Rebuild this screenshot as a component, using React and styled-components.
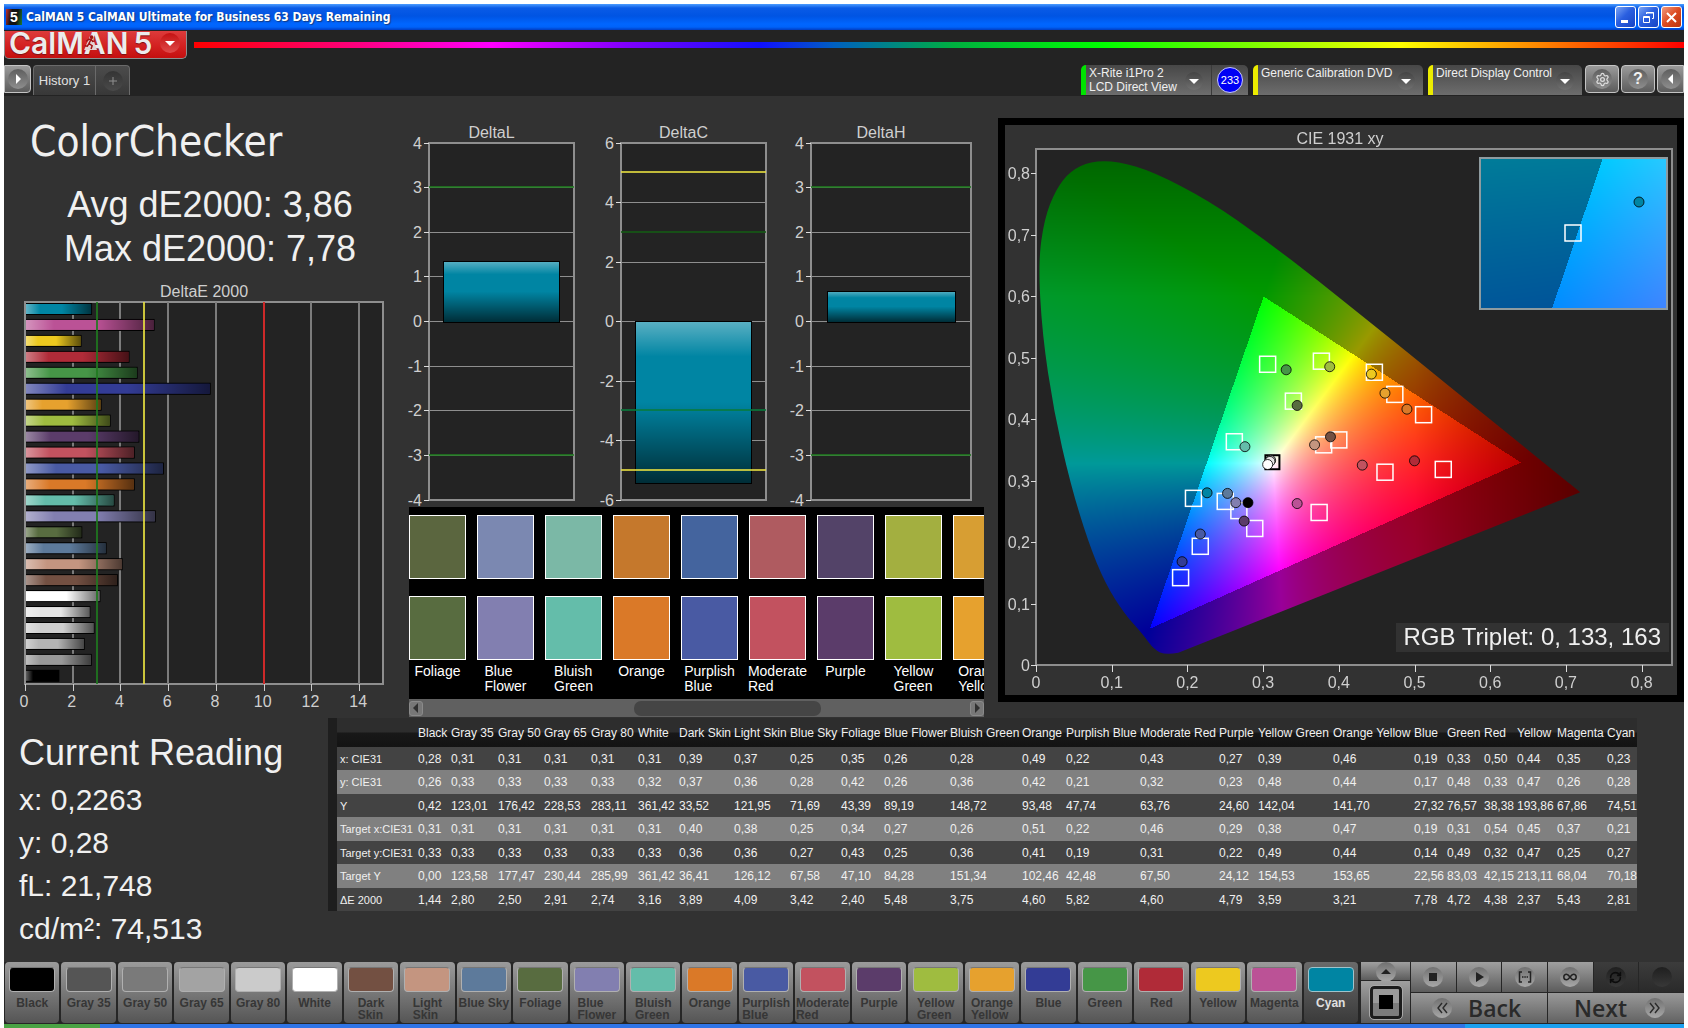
import React, { useEffect, useRef } from "react"
import styled, { createGlobalStyle } from "styled-components"
import { RefreshCw, Settings } from "lucide-react"

const sans = `"Liberation Sans", Arial, sans-serif`
const humanist = `"Open Sans", "Noto Sans", sans-serif`
const condensed = `"DejaVu Sans Condensed", "DejaVu Sans", sans-serif`

const theme = {
    shell: "#232323",
    panel: "#323232",
    frame: "#8e8e8e",
    text: "#f0f0f0",
    label: "#cfcfcf",
    good: "#1f7a1f",
    warn: "#e8e040",
    bad: "#d62020"
}

const GlobalStyle = createGlobalStyle`
    *, *::before, *::after {
        box-sizing: border-box;
    }
    body {
        margin: 0;
        background: #fff;
        font-family: ${sans};
        color: ${theme.text};
    }
    button {
        font-family: inherit;
        padding: 0;
        margin: 0;
        cursor: pointer;
    }
    h1, h2, p {
        margin: 0;
        font-weight: normal;
    }
`

/* ---------- data ---------- */

const patches = [
    { name: "Black", color: "#000000", x: "0,28", y: "0,26", Y: "0,42", tx: "0,31", ty: "0,33", tY: "0,00", dE: "1,44", col: 33 },
    { name: "Gray 35", color: "#555555", bar: "#999999", x: "0,31", y: "0,33", Y: "123,01", tx: "0,31", ty: "0,33", tY: "123,58", dE: "2,80", col: 47 },
    { name: "Gray 50", color: "#7a7a7a", bar: "#b4b4b4", x: "0,31", y: "0,33", Y: "176,42", tx: "0,31", ty: "0,33", tY: "177,47", dE: "2,50", col: 46 },
    { name: "Gray 65", color: "#a3a3a3", bar: "#cfcfcf", x: "0,31", y: "0,33", Y: "228,53", tx: "0,31", ty: "0,33", tY: "230,44", dE: "2,91", col: 47 },
    { name: "Gray 80", color: "#cbcbcb", bar: "#e6e6e6", x: "0,31", y: "0,33", Y: "283,11", tx: "0,31", ty: "0,33", tY: "285,99", dE: "2,74", col: 47 },
    { name: "White", color: "#ffffff", x: "0,31", y: "0,32", Y: "361,42", tx: "0,31", ty: "0,33", tY: "361,42", dE: "3,16", col: 41 },
    { name: "Dark Skin", color: "#735042", x: "0,39", y: "0,37", Y: "33,52", tx: "0,40", ty: "0,36", tY: "36,41", dE: "3,89", col: 55 },
    { name: "Light Skin", color: "#c49580", x: "0,37", y: "0,36", Y: "121,95", tx: "0,38", ty: "0,36", tY: "126,12", dE: "4,09", col: 56 },
    { name: "Blue Sky", color: "#5d7a9b", x: "0,25", y: "0,28", Y: "71,69", tx: "0,25", ty: "0,27", tY: "67,58", dE: "3,42", col: 51 },
    { name: "Foliage", color: "#586c40", x: "0,35", y: "0,42", Y: "43,39", tx: "0,34", ty: "0,43", tY: "47,10", dE: "2,40", col: 43 },
    { name: "Blue Flower", color: "#827fb0", x: "0,26", y: "0,26", Y: "89,19", tx: "0,27", ty: "0,25", tY: "84,28", dE: "5,48", col: 66 },
    { name: "Bluish Green", color: "#64bdaa", x: "0,28", y: "0,36", Y: "148,72", tx: "0,26", ty: "0,36", tY: "151,34", dE: "3,75", col: 72 },
    { name: "Orange", color: "#da7928", x: "0,49", y: "0,42", Y: "93,48", tx: "0,51", ty: "0,41", tY: "102,46", dE: "4,60", col: 44 },
    { name: "Purplish Blue", color: "#495aa3", x: "0,22", y: "0,21", Y: "47,74", tx: "0,22", ty: "0,19", tY: "42,48", dE: "5,82", col: 74 },
    { name: "Moderate Red", color: "#c2525f", x: "0,43", y: "0,32", Y: "63,76", tx: "0,46", ty: "0,31", tY: "67,50", dE: "4,60", col: 79 },
    { name: "Purple", color: "#5b3c6a", x: "0,27", y: "0,23", Y: "24,60", tx: "0,29", ty: "0,22", tY: "24,12", dE: "4,79", col: 39 },
    { name: "Yellow Green", color: "#9fbc40", x: "0,39", y: "0,48", Y: "142,04", tx: "0,38", ty: "0,49", tY: "154,53", dE: "3,59", col: 75 },
    { name: "Orange Yellow", color: "#e6a12e", x: "0,46", y: "0,44", Y: "141,70", tx: "0,47", ty: "0,44", tY: "153,65", dE: "3,21", col: 81 },
    { name: "Blue", color: "#333c95", x: "0,19", y: "0,17", Y: "27,32", tx: "0,19", ty: "0,14", tY: "22,56", dE: "7,78", col: 33 },
    { name: "Green", color: "#469647", x: "0,33", y: "0,48", Y: "76,57", tx: "0,31", ty: "0,49", tY: "83,03", dE: "4,72", col: 37 },
    { name: "Red", color: "#b02b38", x: "0,50", y: "0,33", Y: "38,38", tx: "0,54", ty: "0,32", tY: "42,15", dE: "4,38", col: 33 },
    { name: "Yellow", color: "#edc91f", x: "0,44", y: "0,47", Y: "193,86", tx: "0,45", ty: "0,47", tY: "213,11", dE: "2,37", col: 40 },
    { name: "Magenta", color: "#bb5296", x: "0,35", y: "0,26", Y: "67,86", tx: "0,37", ty: "0,25", tY: "68,04", dE: "5,43", col: 50 },
    { name: "Cyan", color: "#0085a3", x: "0,23", y: "0,28", Y: "74,51", tx: "0,21", ty: "0,27", tY: "70,18", dE: "2,81", col: 33 }
]

const tableRows = [
    ["x: CIE31", "x"],
    ["y: CIE31", "y"],
    ["Y", "Y"],
    ["Target x:CIE31", "tx"],
    ["Target y:CIE31", "ty"],
    ["Target Y", "tY"],
    ["ΔE 2000", "dE"]
]

const strip = [
    ["Foliage", "#5b663f", "#586c40"],
    ["Blue Flower", "#7b88b1", "#827fb0"],
    ["Bluish Green", "#7bb8a6", "#64bdaa"],
    ["Orange", "#c5782c", "#da7928"],
    ["Purplish Blue", "#44649e", "#495aa3"],
    ["Moderate Red", "#af5b60", "#c2525f"],
    ["Purple", "#534368", "#5b3c6a"],
    ["Yellow Green", "#a3af40", "#9fbc40"],
    ["Orange Yellow", "#d79e33", "#e6a12e"]
]

const targets = [
    [0.306, 0.489], [0.377, 0.494], [0.447, 0.476], [0.474, 0.44], [0.512, 0.407],
    [0.34, 0.429], [0.262, 0.363], [0.4, 0.366], [0.38, 0.358], [0.461, 0.3135],
    [0.538, 0.318], [0.208, 0.271], [0.25, 0.266], [0.268, 0.251], [0.289, 0.222],
    [0.374, 0.248], [0.217, 0.193], [0.191, 0.142]
]

const measured = [
    [0.3305, 0.48, "#469647"], [0.388, 0.485, "#9fbc40"], [0.443, 0.473, "#edc91f"],
    [0.461, 0.442, "#e6a12e"], [0.49, 0.416, "#da7928"], [0.345, 0.422, "#586c40"],
    [0.276, 0.355, "#64bdaa"], [0.389, 0.371, "#735042"], [0.368, 0.358, "#c49580"],
    [0.31, 0.333, "#b4b4b4"], [0.309, 0.331, "#e6e6e6"], [0.306, 0.326, "#ffffff"],
    [0.431, 0.325, "#c2525f"], [0.5, 0.332, "#b02b38"], [0.226, 0.28, "#0085a3"],
    [0.253, 0.279, "#5d7a9b"], [0.264, 0.264, "#827fb0"], [0.28, 0.264, "#000000"],
    [0.275, 0.234, "#5b3c6a"], [0.345, 0.2625, "#bb5296"], [0.217, 0.213, "#495aa3"],
    [0.193, 0.168, "#333c95"]
]

const locus = [
    [0.188, 0.02], [0.172, 0.016], [0.156, 0.025], [0.141, 0.05], [0.117, 0.083],
    [0.0913, 0.1327], [0.0687, 0.2007], [0.0454, 0.295], [0.0235, 0.4127], [0.0082, 0.5384],
    [0.003, 0.655], [0.011, 0.725], [0.026, 0.773], [0.045, 0.803], [0.072, 0.819],
    [0.108, 0.819], [0.155, 0.802], [0.2296, 0.7543], [0.3016, 0.6923], [0.3731, 0.6245],
    [0.4441, 0.5547], [0.5125, 0.4866], [0.5752, 0.4242], [0.627, 0.3725], [0.6915, 0.3083],
    [0.719, 0.2809]
]

const decimal = value => value.toString().replace(".", ",")
const number = text => parseFloat(text.replace(",", "."))

/* ---------- shell ---------- */

const Page = styled.div`
    min-height: 100vh;
    padding: 4px 4px 0;
    display: flex;
    flex-direction: column;
`

const Window = styled.div`
    flex: 1;
    display: flex;
    flex-direction: column;
    background: ${theme.shell};
`

const TitleBar = styled.header`
    height: 26px;
    display: flex;
    align-items: center;
    gap: 4px;
    padding: 0 2px;
    background: linear-gradient(#4b9cff 0, #0a5be6 4px, #0054e3 12px, #0066ff 20px, #0063fa 23px, #003dc2 26px);
`

const AppIcon = styled.span`
    width: 16px;
    height: 16px;
    background: linear-gradient(100deg, #c03030, #111 35%, #111 65%, #1d7c30);
    color: #fff;
    font: bold 14px/16px ${sans};
    text-align: center;
`

const WindowTitle = styled.h1`
    flex: 1;
    font: bold 12px/20px ${condensed};
    color: #fff;
    text-shadow: 1px 1px 1px #123a80;
`

const WindowButton = styled.button`
    width: 21px;
    height: 22px;
    margin-left: -2px;
    display: grid;
    place-items: center;
    border: 1px solid #fff;
    border-radius: 3px;
    background: ${props => props.$close ? "linear-gradient(135deg, #f09a80, #dc4a20 50%, #b93410)" : "linear-gradient(135deg, #7ba4f4, #2a5fe0 45%, #1743c4)"};
    svg {
        display: block;
    }
`

const BrandBar = styled.div`
    height: 34px;
    display: flex;
    align-items: flex-start;
    gap: 7px;
    padding-top: 1px;
`

const Brand = styled.button`
    position: relative;
    width: 183px;
    height: 28px;
    flex: none;
    display: flex;
    align-items: center;
    gap: 5px;
    padding: 0 6px 3px 4px;
    overflow: hidden;
    border: 1px solid #8d8d8d;
    border-top: 0;
    border-radius: 0 0 5px 5px;
    background: linear-gradient(#dd3b3b, #d32121 55%, #c40f0f);
    font: 600 30px/24px Inter, ${sans};
    color: #ececec;
    text-shadow: 0 1px 1px #7c1010;
`

const Runner = styled.svg`
    position: absolute;
    left: 78px;
    top: 4px;
`

const BrandArrow = styled.span`
    width: 20px;
    height: 20px;
    margin-left: auto;
    display: grid;
    place-items: center;
    border-radius: 50%;
    background: linear-gradient(#c41212, #df4a4a);
`

const Rainbow = styled.div`
    flex: 1;
    height: 6px;
    margin-top: 11px;
    background: linear-gradient(90deg, #f00 0, #ff0080 11%, #f0f 20%, #8000ff 29%, #1010ff 38%, #0060c0 43%, #00b040 51%, #0f0 61%, #7dff00 71%, #ff0 81%, #ff8a00 90%, #f00 100%);
`

const TabBar = styled.nav`
    height: 32px;
    display: flex;
    align-items: flex-end;
    padding-bottom: 1px;
`

const IconButton = styled.button`
    width: ${props => props.$cut ? 27 : 34}px;
    height: 28px;
    margin: 0 0 2px ${props => props.$first ? 0 : 2}px;
    display: grid;
    place-items: center;
    border: 1px solid #c4c4c4;
    border-radius: ${props => props.$first ? "0 4px 4px 0" : props.$cut ? "4px 0 0 4px" : "4px"};
    background: linear-gradient(#9a9a9a, #5c5c5c);
`

const Disc = styled.span`
    width: ${props => props.$size || 20}px;
    height: ${props => props.$size || 20}px;
    display: grid;
    place-items: center;
    border-radius: 50%;
    background: ${props => props.$dim ? "linear-gradient(#343434, #4a4a4a)" : "linear-gradient(#5e5e5e, #8e8e8e)"};
    color: ${props => props.$dim ? "#909090" : "#f2f2f2"};
    font: bold 16px/20px ${sans};
`

const Tab = styled.div`
    height: 30px;
    margin-left: 2px;
    display: flex;
    border: 1px solid #6a6a6a;
    border-bottom: 0;
    border-radius: 4px 4px 0 0;
    background: linear-gradient(#4c4c4c, #383838);
`

const TabButton = styled.button`
    width: ${props => props.$width}px;
    display: grid;
    place-items: center;
    border: 0;
    border-right: ${props => props.$divided ? "1px solid #6a6a6a" : 0};
    background: none;
    color: #e0e0e0;
    font-size: 13px;
`

const Devices = styled.div`
    margin-left: auto;
    display: flex;
    align-items: flex-end;
    gap: 5px;
`

const Device = styled.div`
    height: 30px;
    width: ${props => props.$width}px;
    display: flex;
    border-left: 5px solid ${props => props.$status};
    border-radius: 5px 5px 0 0;
    background: linear-gradient(#474747, #6d6d6d);
    overflow: hidden;
`

const DeviceButton = styled.button`
    flex: 1;
    display: flex;
    align-items: flex-start;
    justify-content: space-between;
    padding: 1px 8px 0 3px;
    border: 0;
    background: none;
    color: ${theme.text};
    font-size: 12px;
    line-height: 14px;
    text-align: left;
    white-space: nowrap;
`

const DeviceArrow = styled(Disc)`
    margin-top: 6px;
    background: linear-gradient(#444, #707070);
`

const Counter = styled.div`
    width: 37px;
    display: grid;
    place-items: center;
    border-left: 1px solid #3a3a3a;
    span {
        width: 26px;
        height: 26px;
        border: 1px solid #c8c8ff;
        border-radius: 50%;
        background: #0000f5;
        color: #fff;
        font-size: 11px;
        line-height: 24px;
        text-align: center;
    }
`

const Tools = styled.div`
    display: flex;
    margin-left: 1px;
`

const Content = styled.main`
    flex: 1;
    background: ${theme.panel};
`

const Charts = styled.div`
    display: grid;
    grid-template-columns: minmax(0, 401fr) minmax(0, 593fr) minmax(0, 686fr);
    align-items: start;
`

const Svg = styled.svg`
    display: block;
    width: 100%;
    height: auto;
    overflow: hidden;
    font-family: ${sans};
    font-size: 16px;
    fill: ${theme.label};
`

/* ---------- left column ---------- */

const Summary = styled.div`
    height: 188px;
    padding-top: 16px;
`

const SummaryTitle = styled.h2`
    padding-left: 26px;
    font: 42px/60px ${condensed};
`

const SummaryFigures = styled.p`
    padding: 11px 0 0 11px;
    font-size: 36px;
    line-height: 44px;
    text-align: center;
`

const DeltaEChart = () => {
    const left = 21
    const top = 18
    const width = 358
    const height = 382
    const at = value => Math.round(left + value * width / 15)
    const bars = [...patches].reverse()
    return (
        <Svg viewBox="0 0 401 433" role="img" aria-label="DeltaE 2000">
            <defs>
                <linearGradient id="shadeX">
                    <stop offset="0" stopColor="#fff" stopOpacity="0.38" />
                    <stop offset="0.22" stopColor="#fff" stopOpacity="0" />
                    <stop offset="0.55" stopColor="#000" stopOpacity="0" />
                    <stop offset="1" stopColor="#000" stopOpacity="0.6" />
                </linearGradient>
            </defs>
            <text x="200" y="13" textAnchor="middle">DeltaE 2000</text>
            <g shapeRendering="crispEdges">
                <rect x={left} y={top} width={width} height={height} fill={theme.shell} stroke={theme.frame} strokeWidth="2" />
                {[2, 4, 6, 8, 10, 12, 14].map(v => <rect key={v} x={at(v) - 1} y={top} width="2" height={height} fill="#7c7c7c" />)}
                {[0, 2, 4, 6, 8, 10, 12, 14].map(v => <rect key={v} x={at(v)} y={top + height} width="1" height="7" fill="#ccc" />)}
            </g>
            {bars.map((patch, i) => {
                const y = top + 2 + i * 15.95
                const w = number(patch.dE) * width / 15 - 1
                return (
                    <g key={patch.name}>
                        <rect x={left + 1} y={y - 1} width={w} height="12" fill="#000" />
                        <rect x={left + 1} y={y} width={w - 1} height="10" fill={patch.bar || patch.color} />
                        <rect x={left + 1} y={y} width={w - 1} height="10" fill="url(#shadeX)" />
                    </g>
                )
            })}
            <rect x={at(3) - 1} y={top} width="2" height={height} fill={theme.good} opacity="0.85" />
            <rect x={at(5) - 1} y={top} width="2" height={height} fill={theme.warn} opacity="0.85" />
            <rect x={at(10) - 1} y={top} width="2" height={height} fill={theme.bad} opacity="0.9" />
            {[0, 2, 4, 6, 8, 10, 12, 14].map(v => <text key={v} x={left - 1 + v * width / 15} y={top + height + 23} textAnchor="middle">{v}</text>)}
        </Svg>
    )
}

/* ---------- middle column ---------- */

const Middle = styled.div`
    padding-top: 26px;
`

const DeltaRow = styled.div`
    display: grid;
    grid-template-columns: 192fr 190fr 198fr;
    margin-right: 13px;
`

const DeltaChart = ({ title, total, width, limit, step, value, lines }) => {
    const left = 24
    const top = 21
    const height = 357
    const at = v => Math.floor(top + (limit - v) * height / (2 * limit))
    const ticks = []
    for (let v = limit; v >= -limit; v -= step) ticks.push(v)
    const inset = width / 10
    const barTop = Math.min(at(0), at(value))
    const barHeight = Math.abs(at(0) - at(value))
    return (
        <Svg viewBox={`0 0 ${total} 385`} role="img" aria-label={title}>
            <defs>
                <linearGradient id="shadeY" x2="0" y2="1">
                    <stop offset="0" stopColor="#fff" stopOpacity="0.36" />
                    <stop offset="0.22" stopColor="#fff" stopOpacity="0" />
                    <stop offset="0.5" stopColor="#000" stopOpacity="0" />
                    <stop offset="1" stopColor="#000" stopOpacity="0.66" />
                </linearGradient>
            </defs>
            <text x={left + width / 2 - 10} y="16" textAnchor="middle">{title}</text>
            <g shapeRendering="crispEdges">
                <rect x={left} y={top} width={width} height={height} fill={theme.shell} stroke={theme.frame} strokeWidth="2" />
                {ticks.map(v => <rect key={v} x={left} y={at(v)} width={width} height="1" fill={theme.frame} />)}
                {ticks.map(v => <rect key={v} x={left - 5} y={at(v)} width="5" height="1" fill="#ddd" />)}
                <rect x={left + inset} y={barTop} width={width - 2 * inset} height={barHeight + 1} fill="#0085a3" />
                <rect x={left + inset} y={barTop} width={width - 2 * inset} height={barHeight + 1} fill="url(#shadeY)" stroke="#000" />
                {lines.map(([v, color]) => <rect key={v} x={left} y={at(v) - 1} width={width} height="2" fill={color} opacity="0.8" />)}
            </g>
            {ticks.map(v => <text key={v} x={left - 7} y={at(v) + 6} textAnchor="end">{v}</text>)}
        </Svg>
    )
}

const SwatchPanel = styled.div`
    margin: 0 14px 0 4px;
`

const SwatchStrip = styled.div`
    height: 192px;
    padding-top: 8px;
    display: flex;
    gap: 11px;
    overflow: hidden;
    background: #000;
`

const SwatchColumn = styled.div`
    width: 57px;
    flex: none;
    display: flex;
    flex-direction: column;
    align-items: center;
    gap: 17px;
`

const Swatch = styled.div`
    width: 57px;
    height: 64px;
    flex: none;
    border: 1px solid #fff;
    background: ${props => props.$color};
`

const SwatchName = styled.p`
    width: min-content;
    margin-top: -13px;
    font-size: 14px;
    line-height: 15px;
    color: #fff;
`

const ScrollBar = styled.div`
    height: 18px;
    display: grid;
    grid-template-columns: 14px 211fr 186fr 149fr 14px;
    align-items: center;
    background: #606060;
`

const ScrollButton = styled.button`
    height: 15px;
    display: grid;
    place-items: center;
    border: 1px solid #8a8a8a;
    border-radius: 3px;
    background: #777;
`

const ScrollThumb = styled.div`
    grid-column: 3;
    height: 15px;
    border-radius: 7px;
    background: #454545;
`

/* ---------- chromaticity diagram ---------- */

const CiePanel = styled.div`
    margin-top: 22px;
    border: 7px solid #000;
    display: grid;
`

const CieCanvas = styled.canvas`
    grid-area: 1 / 1;
    display: block;
    width: 100%;
`

const CieSvg = styled(Svg)`
    grid-area: 1 / 1;
`

const cie = { width: 672, height: 570, left: 31, top: 24, right: 667, bottom: 540, sx: 757, sy: 615 }
const zoomBox = { x: 475, y: 33, width: 187, height: 151, sx: 3660, sy: 3010, cx: 568, cy: 108 }
const px = x => cie.left + x * cie.sx
const py = y => cie.bottom - y * cie.sy

const inGamut = (x, y) => {
    const side = (ax, ay, bx, by) => (bx - ax) * (y - ay) - (by - ay) * (x - ax)
    return side(0.64, 0.33, 0.3, 0.6) >= 0 && side(0.3, 0.6, 0.15, 0.06) >= 0 && side(0.15, 0.06, 0.64, 0.33) >= 0
}

// brightest colour with the given chromaticity, dimmed outside Rec. 709
const chroma = (x, y) => {
    const X = x / y
    const Z = (1 - x - y) / y
    const rgb = [
        3.2406 * X - 1.5372 - 0.4986 * Z,
        -0.9689 * X + 1.8758 + 0.0415 * Z,
        0.0557 * X - 0.204 + 1.057 * Z
    ].map(c => Math.max(c, 0))
    const peak = Math.max(...rgb)
    const falloff = 1 - Math.max(0, x - 0.5) * 1.9 - Math.max(0, y - 0.6) * 1.5
    const level = 255 * falloff * (inGamut(x, y) ? 1 : 0.6)
    return rgb.map(c => Math.pow(c / peak, 0.95) * level)
}

const paint = (ctx, x0, y0, width, height, toX, toY) => {
    const image = ctx.createImageData(width, height)
    for (let j = 0; j < height; j++) {
        for (let i = 0; i < width; i++) {
            const [r, g, b] = chroma(toX(x0 + i), Math.max(toY(y0 + j), 0.001))
            const k = 4 * (j * width + i)
            image.data[k] = r
            image.data[k + 1] = g
            image.data[k + 2] = b
            image.data[k + 3] = 255
        }
    }
    ctx.putImageData(image, x0, y0)
}

const CieDiagram = () => {
    const ref = useRef(null)

    useEffect(() => {
        const ctx = ref.current.getContext("2d")
        paint(ctx, cie.left, cie.top, cie.right - cie.left, cie.bottom - cie.top,
            i => (i - cie.left) / cie.sx, j => (cie.bottom - j) / cie.sy)

        // keep only what lies inside the spectral locus
        ctx.globalCompositeOperation = "destination-in"
        ctx.beginPath()
        const pts = locus.map(([x, y]) => [px(x), py(y)])
        ctx.moveTo(...pts[0])
        for (let i = 1; i < pts.length - 1; i++) {
            const [ax, ay] = pts[i]
            const [bx, by] = pts[i + 1]
            ctx.quadraticCurveTo(ax, ay, (ax + bx) / 2, (ay + by) / 2)
        }
        ctx.lineTo(...pts[pts.length - 1])
        ctx.closePath()
        ctx.fill()

        ctx.globalCompositeOperation = "destination-over"
        ctx.fillStyle = theme.shell
        ctx.fillRect(cie.left, cie.top, cie.right - cie.left, cie.bottom - cie.top)

        ctx.globalCompositeOperation = "source-over"
        paint(ctx, zoomBox.x, zoomBox.y, zoomBox.width, zoomBox.height,
            i => 0.2076 + (i - zoomBox.cx) / zoomBox.sx, j => 0.2712 + (zoomBox.cy - j) / zoomBox.sy)
    }, [])

    return (
        <CiePanel>
            <CieCanvas ref={ref} width={cie.width} height={cie.height} />
            <CieSvg viewBox={`0 0 ${cie.width} ${cie.height}`} role="img" aria-label="CIE 1931 xy">
                <text x="335" y="19" textAnchor="middle">CIE 1931 xy</text>
                <rect x={cie.left} y={cie.top} width={cie.right - cie.left} height={cie.bottom - cie.top} fill="none" stroke={theme.frame} strokeWidth="2" shapeRendering="crispEdges" />
                {[0, 0.1, 0.2, 0.3, 0.4, 0.5, 0.6, 0.7, 0.8].map(v => (
                    <g key={v}>
                        <rect x={Math.round(px(v))} y={cie.bottom} width="1" height="7" fill="#ddd" />
                        <text x={px(v)} y={cie.bottom + 23} textAnchor="middle">{decimal(v)}</text>
                        <rect x={cie.left - 5} y={Math.round(py(v))} width="5" height="1" fill="#ddd" />
                        <text x={cie.left - 6} y={py(v) + 6} textAnchor="end">{decimal(v)}</text>
                    </g>
                ))}
                <g fill="none" stroke="#fff" strokeWidth="1.5">
                    {targets.map(([x, y]) => <rect key={`${x}-${y}`} x={px(x) - 8} y={py(y) - 8} width="16" height="16" />)}
                    <rect x={zoomBox.cx - 8} y={zoomBox.cy - 8} width="16" height="16" />
                </g>
                <rect x={px(0.3123) - 7} y={py(0.3297) - 7} width="14" height="14" fill="none" stroke="#000" strokeWidth="2" />
                <g stroke="#000" strokeOpacity="0.8">
                    {measured.map(([x, y, color]) => <circle key={`${x}-${y}`} cx={px(x)} cy={py(y)} r="5" fill={color} />)}
                    <circle cx="634" cy="77" r="5" fill="#0085a3" />
                </g>
                <rect x={zoomBox.x} y={zoomBox.y} width={zoomBox.width} height={zoomBox.height} fill="none" stroke="#8e9ba0" strokeWidth="2" shapeRendering="crispEdges" />
                <rect x="391" y="498" width="273" height="29" fill={theme.panel} />
                <text x="656" y="520" textAnchor="end" fontSize="24" fill={theme.text}>RGB Triplet: 0, 133, 163</text>
            </CieSvg>
        </CiePanel>
    )
}

/* ---------- readings and table ---------- */

const Lower = styled.div`
    display: flex;
    align-items: flex-start;
    padding: 1px 47px 0 15px;
`

const Readings = styled.section`
    width: 309px;
    flex: none;
    padding-top: 12px;
    font-size: 30px;
    line-height: 43px;
`

const ReadingsTitle = styled.h2`
    padding-bottom: 2px;
    font-size: 36px;
    line-height: 46px;
`

const TableWrap = styled.div`
    flex: 1;
    min-width: 0;
    border-left: 9px solid #1e1e1e;
`

const Table = styled.table`
    width: 100%;
    table-layout: fixed;
    border-collapse: collapse;
    font-size: 12px;
    white-space: nowrap;
    color: ${theme.text};
    th, td {
        padding: 0 0 0 3px;
        font-weight: normal;
        text-align: left;
    }
    tbody th {
        font-size: 11px;
    }
`

const Column = styled.col`
    width: ${props => props.$width}px;
`

const HeadRow = styled.tr`
    height: 29px;
    background: linear-gradient(#2d2d2d 48%, #181818 52%, #131313);
`

const BodyRow = styled.tr`
    height: ${props => props.$light ? 24 : 23}px;
    background: ${props => props.$light ? "#808080" : "#434343"};
`

const ReadingTable = () =>
    <TableWrap>
        <Table>
            <colgroup>
                <Column $width={78} />
                {patches.map(patch => <Column key={patch.name} $width={patch.col} />)}
            </colgroup>
            <thead>
                <HeadRow>
                    <td></td>
                    {patches.map(patch => <th key={patch.name} scope="col">{patch.name}</th>)}
                </HeadRow>
            </thead>
            <tbody>
                {tableRows.map(([label, key], i) =>
                    <BodyRow key={key} $light={i % 2 === 1}>
                        <th scope="row">{label}</th>
                        {patches.map(patch => <td key={patch.name}>{patch[key]}</td>)}
                    </BodyRow>
                )}
            </tbody>
        </Table>
    </TableWrap>

/* ---------- footer ---------- */

const Footer = styled.footer`
    height: 62px;
    display: flex;
    padding-left: 1px;
    background: #262626;
`

const PatchList = styled.div`
    flex: 1;
    display: grid;
    grid-template-columns: repeat(24, minmax(0, 1fr));
    column-gap: 2px;
    padding-right: 3px;
`

const PatchButton = styled.button`
    height: 61px;
    padding: 5px 0 0;
    display: flex;
    flex-direction: column;
    align-items: center;
    gap: 5px;
    border: 0;
    border-radius: 4px;
    background: ${props => props.$active ? "linear-gradient(#6a6a6a, #3a3a3a)" : "linear-gradient(#9b9b9b, #555)"};
    color: ${props => props.$active ? "#e0e0e0" : "#363636"};
    font: bold 12px/12px ${sans};
`

const PatchChip = styled.span`
    width: 46px;
    height: 25px;
    flex: none;
    border: 1px solid ${props => props.$active ? "#9fc4cc" : "#b0b0b0"};
    border-top-color: ${props => props.$active ? "#9fc4cc" : "#777"};
    border-radius: 4px;
    background: ${props => props.$color};
`

const PatchName = styled.span`
    width: ${props => props.$wrap ? "min-content" : "auto"};
    text-align: left;
    white-space: ${props => props.$wrap ? "normal" : "nowrap"};
`

const PatternBox = styled.div`
    width: 49px;
    height: 61px;
    display: grid;
    grid-template-rows: 18px 1fr;
    gap: 1px;
    margin-right: 1px;
`

const PlainButton = styled.button`
    display: grid;
    place-items: center;
    border: 0;
    background: ${props => props.$off ? "linear-gradient(#3c3c3c, #2a2a2a)" : "linear-gradient(#a0a0a0, #5c5c5c)"};
`

const PatternFrame = styled.span`
    width: 32px;
    height: 33px;
    display: grid;
    place-items: center;
    border: 3px solid #1c1c1c;
    outline: 1px solid #a8a8a8;
    border-radius: 4px;
    background: linear-gradient(#999 50%, #7c7c7c 50%);
    &::after {
        content: "";
        width: 14px;
        height: 14px;
        background: #000;
    }
`

const Transport = styled.div`
    width: 273px;
    height: 61px;
    display: grid;
    grid-template-columns: repeat(6, 1fr);
    grid-template-rows: 30px 30px;
    gap: 1px;
`

const FooterDisc = styled.span`
    width: 20px;
    height: 20px;
    display: grid;
    place-items: center;
    border-radius: 50%;
    background: ${props => props.$off ? "linear-gradient(#1f1f1f, #383838)" : "linear-gradient(#707070, #a8a8a8)"};
`

const StepButton = styled.button`
    grid-column: span 3;
    display: flex;
    align-items: center;
    justify-content: ${props => props.$end ? "flex-end" : "flex-start"};
    gap: ${props => props.$end ? 18 : 16}px;
    padding: 0 19px 0 21px;
    border: 0;
    background: linear-gradient(#999, #626262);
    color: #2a2a2a;
    font: 600 23px/28px ${humanist};
`

const TaskBar = styled.div`
    height: 4px;
    background: linear-gradient(90deg, #4aa344 0 96px, #2f74e6 96px 1461px, #1ba0f0 1461px);
`

const Triangle = ({ points, size = 10, color = "#fff" }) =>
    <svg width={size} height={size} viewBox="0 0 10 10"><polygon points={points} fill={color} /></svg>

const DownArrow = () => <Triangle points="0,3 10,3 5,8" />

const Chevrons = ({ d }) =>
    <svg width="12" height="12" viewBox="0 0 12 12" fill="none" stroke="#2a2a2a" strokeWidth="1.4"><path d={d} /></svg>

const App = () =>
    <Page>
        <GlobalStyle />
        <Window>
            <TitleBar>
                <AppIcon>5</AppIcon>
                <WindowTitle>CalMAN 5 CalMAN Ultimate for Business 63 Days Remaining</WindowTitle>
                <WindowButton aria-label="Minimize">
                    <svg width="13" height="13"><rect x="2" y="9" width="7" height="3" fill="#fff" /></svg>
                </WindowButton>
                <WindowButton aria-label="Restore">
                    <svg width="13" height="13" fill="none" stroke="#fff"><path d="M4.5 3V1.500h7v6H10M4 2h8M1.500 5.500h6v6h-6zM1 6.500h7" /></svg>
                </WindowButton>
                <WindowButton $close aria-label="Close">
                    <svg width="13" height="13" stroke="#fff" strokeWidth="2"><path d="M2 2l9 9M11 2l-9 9" /></svg>
                </WindowButton>
            </TitleBar>

            <BrandBar>
                <Brand aria-label="CalMAN 5 menu">
                    <span>CalMAN</span>
                    <span>5</span>
                    <Runner width="14" height="15" viewBox="0 0 13 14">
                        <path d="M1 14L6.500 1h2L13 14z" fill="#e2d4d4" />
                        <g fill="none" stroke="#a01414" strokeWidth="1.400">
                            <circle cx="8" cy="2" r="1" fill="#a01414" />
                            <path d="M7.500 4L5.500 8l3 2-1 3M5.500 8L4 10.500 1.500 10M3 6l2.500-2h2l1.500 2 2-.5" />
                        </g>
                    </Runner>
                    <BrandArrow><DownArrow /></BrandArrow>
                </Brand>
                <Rainbow />
            </BrandBar>

            <TabBar>
                <IconButton $first $cut aria-label="Expand"><Disc><Triangle points="3,0 8,5 3,10" /></Disc></IconButton>
                <Tab>
                    <TabButton $width={62} $divided>History 1</TabButton>
                    <TabButton $width={33} aria-label="Add history">
                        <Disc $dim><svg width="8" height="8" stroke="#909090"><path d="M4 0v8M0 4h8" /></svg></Disc>
                    </TabButton>
                </Tab>
                <Devices>
                    <Device $width={167} $status="#00e400">
                        <DeviceButton>
                            <span>X-Rite i1Pro 2<br />LCD Direct View</span>
                            <DeviceArrow $size={18}><DownArrow /></DeviceArrow>
                        </DeviceButton>
                        <Counter><span>233</span></Counter>
                    </Device>
                    <Device $width={170} $status="#ecec00">
                        <DeviceButton>Generic Calibration DVD<DeviceArrow $size={18}><DownArrow /></DeviceArrow></DeviceButton>
                    </Device>
                    <Device $width={154} $status="#ecec00">
                        <DeviceButton>Direct Display Control<DeviceArrow $size={18}><DownArrow /></DeviceArrow></DeviceButton>
                    </Device>
                </Devices>
                <Tools>
                    <IconButton aria-label="Settings"><Disc><Settings size={15} color="#ddd" /></Disc></IconButton>
                    <IconButton aria-label="Help"><Disc>?</Disc></IconButton>
                    <IconButton $cut aria-label="Collapse"><Disc><Triangle points="7,0 2,5 7,10" /></Disc></IconButton>
                </Tools>
            </TabBar>

            <Content>
                <Charts>
                    <div>
                        <Summary>
                            <SummaryTitle>ColorChecker</SummaryTitle>
                            <SummaryFigures>Avg dE2000: 3,86<br />Max dE2000: 7,78</SummaryFigures>
                        </Summary>
                        <DeltaEChart />
                    </div>

                    <Middle>
                        <DeltaRow>
                            <DeltaChart title="DeltaL" total={192} width={145} limit={4} step={1} value={1.35} lines={[[3, theme.good], [-3, theme.good]]} />
                            <DeltaChart title="DeltaC" total={190} width={145} limit={6} step={2} value={-5.42} lines={[[5, theme.warn], [3, "#145a14"], [-3, "#087a3c"], [-5, theme.warn]]} />
                            <DeltaChart title="DeltaH" total={198} width={160} limit={4} step={1} value={0.67} lines={[[3, theme.good], [-3, theme.good]]} />
                        </DeltaRow>
                        <SwatchPanel>
                            <SwatchStrip>
                                {strip.map(([name, actual, target]) =>
                                    <SwatchColumn key={name}>
                                        <Swatch $color={actual} />
                                        <Swatch $color={target} />
                                        <SwatchName>{name}</SwatchName>
                                    </SwatchColumn>
                                )}
                            </SwatchStrip>
                            <ScrollBar>
                                <ScrollButton aria-label="Scroll left"><Triangle points="7,0 2,5 7,10" color="#303030" /></ScrollButton>
                                <ScrollThumb />
                                <span />
                                <ScrollButton aria-label="Scroll right"><Triangle points="3,0 8,5 3,10" color="#303030" /></ScrollButton>
                            </ScrollBar>
                        </SwatchPanel>
                    </Middle>

                    <CieDiagram />
                </Charts>

                <Lower>
                    <Readings>
                        <ReadingsTitle>Current Reading</ReadingsTitle>
                        <p>x: 0,2263</p>
                        <p>y: 0,28</p>
                        <p>fL: 21,748</p>
                        <p>cd/m²: 74,513</p>
                    </Readings>
                    <ReadingTable />
                </Lower>
            </Content>

            <Footer>
                <PatchList>
                    {patches.map(({ name, color }) => {
                        const active = name === "Cyan"
                        const wrap = !name.startsWith("Gray") && name !== "Blue Sky"
                        return (
                            <PatchButton key={name} $active={active}>
                                <PatchChip $color={color} $active={active} />
                                <PatchName $wrap={wrap}>{name}</PatchName>
                            </PatchButton>
                        )
                    })}
                </PatchList>
                <PatternBox>
                    <PlainButton aria-label="More patterns"><FooterDisc><Triangle points="0,7 10,7 5,2" color="#222" /></FooterDisc></PlainButton>
                    <PlainButton aria-label="Pattern window"><PatternFrame /></PlainButton>
                </PatternBox>
                <Transport>
                    <PlainButton aria-label="Stop"><FooterDisc><Triangle points="1,1 9,1 9,9 1,9" color="#222" /></FooterDisc></PlainButton>
                    <PlainButton aria-label="Play"><FooterDisc><Triangle points="2,0 10,5 2,10" color="#222" /></FooterDisc></PlainButton>
                    <PlainButton aria-label="Read series">
                        <FooterDisc>
                            <svg width="14" height="12" viewBox="0 0 14 12" fill="none" stroke="#222" strokeWidth="1.500"><path d="M4 1H1.500v10h2.500M10 1h2.500v10h-2.500" /><path d="M4 6h6" strokeDasharray="1.500 0.800" /></svg>
                        </FooterDisc>
                    </PlainButton>
                    <PlainButton aria-label="Read continuously">
                        <FooterDisc>
                            <svg width="14" height="8" viewBox="0 0 14 8" fill="none" stroke="#222" strokeWidth="1.500"><path d="M7 4C5.500 2 4.800 1.200 3.600 1.200a2.700 2.700 0 0 0 0 5.600C4.800 6.800 5.500 6 7 4s2.200-2.800 3.400-2.800a2.700 2.700 0 0 1 0 5.600C9.200 6.800 8.500 6 7 4z" /></svg>
                        </FooterDisc>
                    </PlainButton>
                    <PlainButton $off aria-label="Refresh"><FooterDisc $off><RefreshCw size={13} color="#0c0c0c" strokeWidth={3} /></FooterDisc></PlainButton>
                    <PlainButton $off aria-label="Record"><FooterDisc $off /></PlainButton>
                    <StepButton><FooterDisc><Chevrons d="M6 1L2 6l4 5M11 1L7 6l4 5" /></FooterDisc>Back</StepButton>
                    <StepButton $end>Next<FooterDisc><Chevrons d="M1 1l4 5-4 5M6 1l4 5-4 5" /></FooterDisc></StepButton>
                </Transport>
            </Footer>
        </Window>
        <TaskBar />
    </Page>

export default App
